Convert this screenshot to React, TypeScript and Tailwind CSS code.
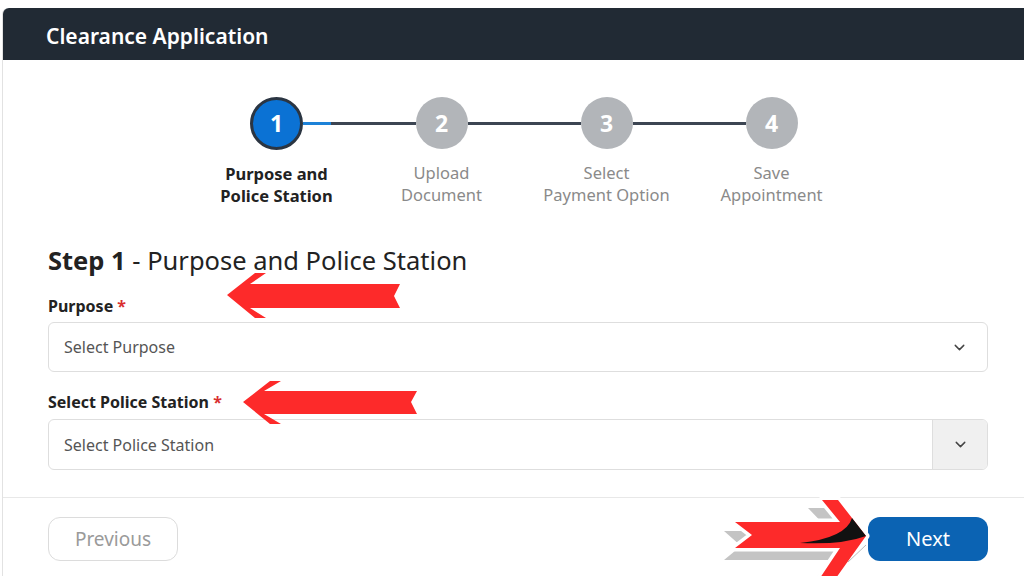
import { ChevronDown } from 'lucide-react'

const PASOS = [
  { n: 1, l1: 'Purpose and', l2: 'Police Station' },
  { n: 2, l1: 'Upload', l2: 'Document' },
  { n: 3, l1: 'Select', l2: 'Payment Option' },
  { n: 4, l1: 'Save', l2: 'Appointment' },
]

function Stepper() {
  return (
    <div className="flex ml-[146px] pt-[37px]">
      {PASOS.map((p, i) => {
        const activo = i === 0
        return (
          <div key={p.n} className="w-[165px] flex flex-col items-center">
            <div className="flex items-center w-full">
              <div className={i === 0 ? 'flex-1' : 'flex-1 h-[3px] bg-[#3c4552]'} />
              {activo ? (
                <div className="w-[53px] h-[53px] rounded-full bg-[#0b72d4] border-[3px] border-[#2b3542] flex items-center justify-center text-white text-[23px] font-bold">
                  {p.n}
                </div>
              ) : (
                <div className="w-[52px] h-[52px] rounded-full bg-[#b2b5b9] flex items-center justify-center text-white text-[23px] font-bold">
                  {p.n}
                </div>
              )}
              {i === 3 ? (
                <div className="flex-1" />
              ) : i === 0 ? (
                <div className="flex-1 flex h-[3px]">
                  <div className="w-[28px] bg-[#1d82d8]" />
                  <div className="flex-1 bg-[#3c4552]" />
                </div>
              ) : (
                <div className="flex-1 h-[3px] bg-[#3c4552]" />
              )}
            </div>
            <div
              className={
                'mt-[13px] text-center text-[16.5px] leading-[22px] ' +
                (activo ? 'font-bold text-[#222]' : 'text-[#8a8a8a]')
              }
            >
              <div>{p.l1}</div>
              <div>{p.l2}</div>
            </div>
          </div>
        )
      })}
    </div>
  )
}

function Flechas() {
  return (
    <svg className="absolute inset-0 pointer-events-none" width="1024" height="576" viewBox="0 0 1024 576">
      {/* flecha purpose */}
      <polygon
        fill="#fd2a2a"
        points="227,295 255,273 266,273 250,284 400,284 394,296 400,308 250,308 266,318 255,318"
      />
      {/* flecha estacion */}
      <polygon
        fill="#fd2a2a"
        points="243,402 270,381 281,381 264,391 417,391 411,402 417,414 264,414 281,424 270,424"
      />
      {/* flecha next: sombra */}
      <polygon
        fill="#c4c4c4"
        points="852,548 826,508 808,508 830,531 724,531 741,546 724,560 830,560 810,586 826,586"
      />
      <polygon
        fill="#ffffff"
        stroke="#ffffff"
        strokeWidth="7"
        strokeLinejoin="round"
        points="866,536 838,500 822,500 840,522 735,522 752,535 735,548 840,548 820,578 836,578"
      />
      <polygon
        fill="#fd2a2a"
        points="866,536 838,500 822,500 840,522 735,522 752,535 735,548 840,548 820,578 836,578"
      />
      <path d="M866 536 L852 518 Q846 538 800 543 Q842 545 866 536 Z" fill="#111" />
      <line x1="848" y1="562" x2="866" y2="545" stroke="#bbb" strokeWidth="1" />
    </svg>
  )
}

export default function App() {
  return (
    <div
      className="relative w-[1024px] h-[576px] overflow-hidden bg-white"
      style={{ fontFamily: '"Noto Sans", "Open Sans", sans-serif' }}
    >
      <div className="ml-[2px] mt-[8px] w-[1030px] h-[600px] border-l border-[#e2e2e2] rounded-tl-md">
        <div className="h-[52px] bg-[#212a34] rounded-tl-md flex items-center pl-[43px] pt-[5px]">
          <h1 className="text-white text-[21px] font-semibold">Clearance Application</h1>
        </div>

        <div className="pl-[45px] w-[985px]">
          <Stepper />

          <h2 className="mt-[36px] text-[25.5px] leading-[34px] text-[#222]">
            <span className="font-bold">Step 1</span> - Purpose and Police Station
          </h2>

          {/* Purpose */}
          <div className="mt-[18px]">
            <label className="block text-[16px] leading-[22px] font-bold text-[#222]">
              Purpose <span className="text-[#d92f2f]">*</span>
            </label>
            <div className="mt-[5px] h-[50px] border border-[#dedede] rounded-md flex items-center pl-[15px] pr-[19px]">
              <span className="flex-1 text-[16px] text-[#555]">Select Purpose</span>
              <ChevronDown size={17} strokeWidth={2} className="text-[#444]" />
            </div>
          </div>

          {/* Police station */}
          <div className="mt-[19px]">
            <label className="block text-[16px] leading-[22px] font-bold text-[#222]">
              Select Police Station <span className="text-[#d92f2f]">*</span>
            </label>
            <div className="mt-[6px] h-[51px] border border-[#dedede] rounded-md flex overflow-hidden">
              <div className="flex-1 flex items-center pl-[15px] text-[16px] text-[#555]">
                Select Police Station
              </div>
              <div className="w-[55px] bg-[#f0f0f0] border-l border-[#dedede] flex items-center justify-center">
                <ChevronDown size={17} strokeWidth={2} className="text-[#444]" />
              </div>
            </div>
          </div>
        </div>

        <div className="mt-[27px] border-t border-[#e8e8e8] pl-[45px] pt-[19px] w-[1022px]">
          <div className="flex justify-between w-[940px]">
            <button className="w-[130px] h-[44px] rounded-xl border border-[#dcdcdc] text-[19px] text-[#9a9a9a]">
              Previous
            </button>
            <button className="w-[120px] h-[44px] rounded-xl bg-[#0b63b3] text-[20px] text-white">
              Next
            </button>
          </div>
        </div>
      </div>

      <Flechas />
    </div>
  )
}
